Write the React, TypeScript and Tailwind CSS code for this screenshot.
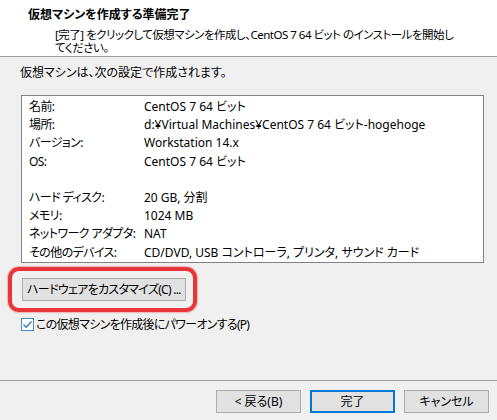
import React from "react";

const rows: [string, string][] = [
  ["名前:", "CentOS 7 64 ビット"],
  ["場所:", "d:¥Virtual Machines¥CentOS 7 64 ビット-hogehoge"],
  ["バージョン:", "Workstation 14.x"],
  ["OS:", "CentOS 7 64 ビット"],
  ["", ""],
  ["ハード ディスク:", "20 GB, 分割"],
  ["メモリ:", "1024 MB"],
  ["ネットワーク アダプタ:", "NAT"],
  ["その他のデバイス:", "CD/DVD, USB コントローラ, プリンタ, サウンド カード"],
];

const font = {
  fontFamily: '"Noto Sans", "Noto Sans CJK JP", sans-serif',
};

function WinButton({
  label,
  primary,
  className,
}: {
  label: string;
  primary?: boolean;
  className?: string;
}) {
  return (
    <button
      className={
        "h-[23px] bg-[#e1e1e1] text-[12px] leading-none text-black flex items-center justify-center whitespace-nowrap " +
        (primary ? "border-2 border-[#0078d7] " : "border border-[#adadad] ") +
        (className ?? "")
      }
    >
      {label}
    </button>
  );
}

export default function App() {
  return (
    <div
      className="w-[497px] h-[420px] bg-[#f0f0f0] flex flex-col text-black text-[12px] overflow-hidden whitespace-nowrap [font-feature-settings:'palt']"
      style={font}
    >
      {/* header */}
      <div className="h-[57px] bg-white border-b border-[#a0a0a0] pl-[28px] pt-[7px] shrink-0">
        <div className="font-bold leading-[16px]">仮想マシンを作成する準備完了</div>
        <div className="pl-[27px] pt-[5px] leading-[13px] text-[11.5px] tracking-[-0.5px]">
          [完了] をクリックして仮想マシンを作成し、CentOS 7 64 ビット のインストールを開始し
          <br />
          てください。
        </div>
      </div>

      {/* body */}
      <div className="flex-1 pl-[20px] pr-[13px]">
        <div className="pt-[8px] leading-[15px]">仮想マシンは、次の設定で作成されます。</div>

        <div className="mt-[15px] ml-[1px] h-[168px] bg-white border border-[#828282] pl-[7px] pt-[2px]">
          {rows.map(([k, v], i) => (
            <div key={i} className="flex h-[18.2px] items-center">
              <span className="w-[115px] shrink-0 tracking-[-0.6px]">{k}</span>
              <span>{v}</span>
            </div>
          ))}
        </div>

        <div className="relative mt-[15px] ml-[2px] w-[164px]">
          <WinButton label="ハードウェアをカスタマイズ(C) ..." className="w-[164px] tracking-[-0.7px]" />
          <span className="absolute left-[-14px] right-[-11px] top-[-11px] bottom-[-11px] rounded-[11px] border-[4px] border-[#e8353a] shadow-[0_0_2px_#e8353a] blur-[0.6px] pointer-events-none" />
        </div>

        <label className="mt-[16px] ml-[1px] flex items-center gap-[2px]">
          <span className="w-[13px] h-[13px] border border-[#3b8fd3] bg-white flex items-center justify-center">
            <svg width="11" height="11" viewBox="0 0 11 11">
              <path d="M1.5 5.5 L4.2 8.2 L9.5 2.5" fill="none" stroke="#2b7fc9" strokeWidth="1.3" />
            </svg>
          </span>
          <span className="leading-[15px] tracking-[-0.7px]">この仮想マシンを作成後にパワーオンする(P)</span>
        </label>
      </div>

      {/* footer */}
      <div className="h-[40px] border-t border-[#a0a0a0] shrink-0 flex justify-end gap-[9px] pt-[9px] pr-[8px]">
        <WinButton label="< 戻る(B)" className="w-[85px]" />
        <WinButton label="完了" primary className="w-[85px]" />
        <WinButton label="キャンセル" className="w-[85px]" />
      </div>
    </div>
  );
}
